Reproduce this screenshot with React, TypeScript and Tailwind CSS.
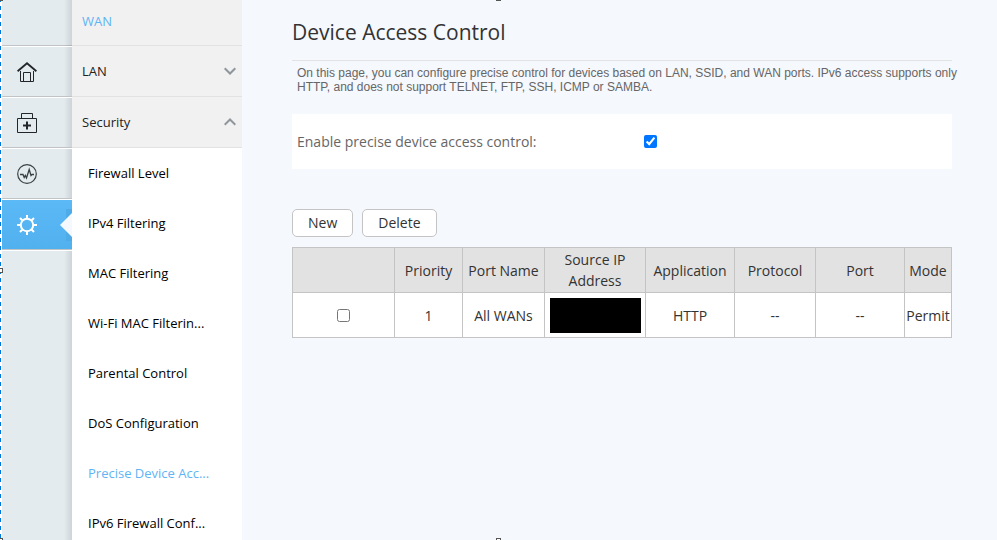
import type { ReactNode } from "react";

type RailItem = { label: string; icon: ReactNode; active?: boolean };

const railItems: RailItem[] = [
  { label: "Home", icon: <HomeIcon /> },
  { label: "Wizard", icon: <KitIcon /> },
  { label: "Diagnosis", icon: <PulseIcon /> },
  { label: "Advanced", icon: <GearIcon />, active: true },
];

const securityItems = [
  "Firewall Level",
  "IPv4 Filtering",
  "MAC Filtering",
  "Wi-Fi MAC Filterin...",
  "Parental Control",
  "DoS Configuration",
  "Precise Device Acc...",
  "IPv6 Firewall Conf...",
];

const activeItem = "Precise Device Acc...";

const headings = ["Priority", "Port Name", "Source IP Address", "Application", "Protocol", "Port", "Mode"];

function HomeIcon() {
  return (
    <svg width="20" height="20" viewBox="0 0 20 20" fill="none" stroke="#22262a">
      <path d="M0.6 9.2 10 1.2l9.400 8" strokeWidth="1.8" />
      <path d="M3.500 9v10.500h13V9M6.500 19.500v-9h7v9" />
    </svg>
  );
}

function KitIcon() {
  return (
    <svg width="20" height="20" viewBox="0 0 20 20" fill="none" stroke="#22262a">
      <path d="M4.500 5.500v-5h11v5M0.500 5.500h19v14h-19z" />
      <path d="M6 12.500h8M10 8.500v8" strokeWidth="2" />
    </svg>
  );
}

function PulseIcon() {
  return (
    <svg width="20" height="20" viewBox="0 0 20 20" fill="none" stroke="#3a4045">
      <circle cx="10" cy="10" r="9.3" strokeWidth="1.2" />
      <path d="M3 10.500h3l1.200 3 1.100-2 1.200 2.500L12.200 5.500l1.800 6 1-1h2" strokeWidth="1.3" />
    </svg>
  );
}

function GearIcon() {
  return (
    <svg width="20" height="20" viewBox="0 0 20 20" fill="none" stroke="#fff" strokeWidth="2">
      <circle cx="10" cy="10" r="6.2" />
      <path d="M10 0v4M10 16v4M0 10h4M16 10h4M3 3l2.700 2.700M14.300 14.300l2.700 2.700M3 17l2.700-2.700M14.300 5.700l2.700-2.700" />
    </svg>
  );
}

function Chevron({ open = false }: { open?: boolean }) {
  return (
    <svg width="12" height="8" viewBox="0 0 12 8" fill="none" stroke="#8f969c" strokeWidth="2">
      <path d={open ? "M0.700 6.800 6 1.500l5.300 5.300" : "M0.700 1.200 6 6.500l5.300-5.300"} />
    </svg>
  );
}

function Rail() {
  return (
    <nav className="relative w-[70px] shrink-0 bg-[#e4ebee]">
      <div className="absolute inset-y-0 right-0 w-2 bg-linear-to-r from-transparent to-black/10" />
      <div className="h-[46px] border-b border-[#c0c4c7]" />
      {railItems.map((item) => (
        <a
          key={item.label}
          href="#"
          aria-label={item.label}
          className={`relative flex h-[51px] items-center border-t border-b border-t-white border-b-[#c0c4c7] pl-[15px] ${
            item.active ? "bg-linear-to-b from-[#5bb9f6] to-[#51b0ee]" : ""
          }`}
        >
          {item.icon}
          {item.active && (
            <svg className="absolute inset-y-0 right-0 my-auto" width="12" height="32" viewBox="0 0 12 32">
              <path d="M6 0h6v32H6z" fill="#4fabe6" />
              <path d="M12 4 0 16l12 12z" fill="#f5f8fd" />
            </svg>
          )}
        </a>
      ))}
      <div className="relative border-t border-white" />
    </nav>
  );
}

function SideMenu() {
  return (
    <nav className="w-[170px] shrink-0 bg-white text-[13px] leading-[22px] text-[#222]">
      <a href="#" className="flex h-[46px] items-center border-b border-[#e2e2e2] bg-[#f1f1f1] px-[10px] pb-1 text-[#5fb4f5]">
        WAN
      </a>
      <button type="button" className="flex h-[51px] w-full items-center justify-between border-b border-[#e2e2e2] bg-[#f1f1f1] pr-[6px] pl-[10px]">
        LAN
        <Chevron />
      </button>
      <button type="button" className="flex h-[51px] w-full items-center justify-between border-b border-[#e2e2e2] bg-[#f1f1f1] pr-[6px] pl-[10px]">
        Security
        <Chevron open />
      </button>
      {securityItems.map((item) => (
        <a key={item} href="#" className={`flex h-[50px] items-center pl-4 ${item === activeItem ? "text-[#5fb4f5]" : "text-black"}`}>
          {item}
        </a>
      ))}
    </nav>
  );
}

function RuleTable() {
  return (
    <table className="mt-[10px] w-full table-fixed border-collapse bg-white text-center text-sm leading-[21px] text-[#333] [&_td]:border [&_td]:border-[#c4c4c4] [&_td]:p-0 [&_th]:border [&_th]:border-[#c4c4c4] [&_th]:p-0 [&_th]:font-normal">
      <colgroup>
        <col className="w-[102px]" />
        <col className="w-[68px]" />
        <col className="w-[82px]" />
        <col className="w-[101px]" />
        <col className="w-[89px]" />
        <col className="w-[81px]" />
        <col className="w-[89px]" />
        <col className="w-[47px]" />
      </colgroup>
      <thead>
        <tr className="h-[45px] bg-[#e2e2e2]">
          <th aria-label="Select" />
          {headings.map((heading) => (
            <th key={heading}>{heading}</th>
          ))}
        </tr>
      </thead>
      <tbody>
        <tr className="h-[45px]">
          <td>
            <input type="checkbox" aria-label="Select rule 1" className="mx-auto block size-[13px]" />
          </td>
          <td>1</td>
          <td>All WANs</td>
          <td>
            <div className="mx-auto h-[35px] w-[91px] bg-black" />
          </td>
          <td>HTTP</td>
          <td>--</td>
          <td>--</td>
          <td>Permit</td>
        </tr>
      </tbody>
    </table>
  );
}

// dashed selection edge with its resize handles
function SelectionEdge() {
  return (
    <>
      <div className="w-[2px] shrink-0 bg-white">
        <div className="h-full w-px bg-[repeating-linear-gradient(to_bottom,#0078d7_0_2px,#fff_2px_6px,#0078d7_6px_8px)]" />
      </div>
      <div className="absolute top-0 left-0 z-10 h-px w-[3px] bg-[#555]" />
      <div className="absolute inset-x-0 top-0 z-10 mx-auto h-px w-[5px] bg-[#555]" />
      <div className="absolute inset-y-0 left-0 z-10 my-auto h-[5px] w-[3px] border border-l-0 border-[#555] bg-white" />
      <div className="absolute bottom-0 left-0 z-10 h-[2px] w-[3px] border-t border-r border-[#555] bg-white" />
      <div className="absolute inset-x-0 bottom-0 z-10 mx-auto h-[2px] w-[5px] border border-b-0 border-[#555] bg-white" />
    </>
  );
}

export default function App() {
  return (
    <div className="relative flex h-screen overflow-hidden bg-[#f5f8fd] font-['Open_Sans',sans-serif]">
      <SelectionEdge />
      <Rail />
      <SideMenu />
      <main className="min-w-0 flex-1 pr-[45px] pl-[50px]">
        <h1 className="border-b border-[#e2e2e2] pt-[18px] pb-[14px] text-[21px] leading-[28px] text-[#333]">Device Access Control</h1>
        <p className="-mr-[10px] mt-[5px] ml-[5px] font-['Liberation_Sans',sans-serif] text-xs leading-[14px] text-[#666]">
          On this page, you can configure precise control for devices based on LAN, SSID, and WAN ports. IPv6 access supports only HTTP, and does not support TELNET, FTP, SSH, ICMP or SAMBA.
        </p>
        <div className="mt-5 flex h-[55px] items-center bg-white px-[5px] text-sm text-[#666]">
          <label htmlFor="enable-control" className="w-[347px]">
            Enable precise device access control:
          </label>
          <input id="enable-control" type="checkbox" defaultChecked className="size-[13px]" />
        </div>
        <div className="mt-10 flex gap-[9px] text-sm leading-[22px] text-[#333]">
          <button type="button" className="h-7 rounded-[5px] border border-[#c4c4c4] bg-white px-[15px]">
            New
          </button>
          <button type="button" className="h-7 rounded-[5px] border border-[#c4c4c4] bg-white px-[15px]">
            Delete
          </button>
        </div>
        <RuleTable />
      </main>
    </div>
  );
}
